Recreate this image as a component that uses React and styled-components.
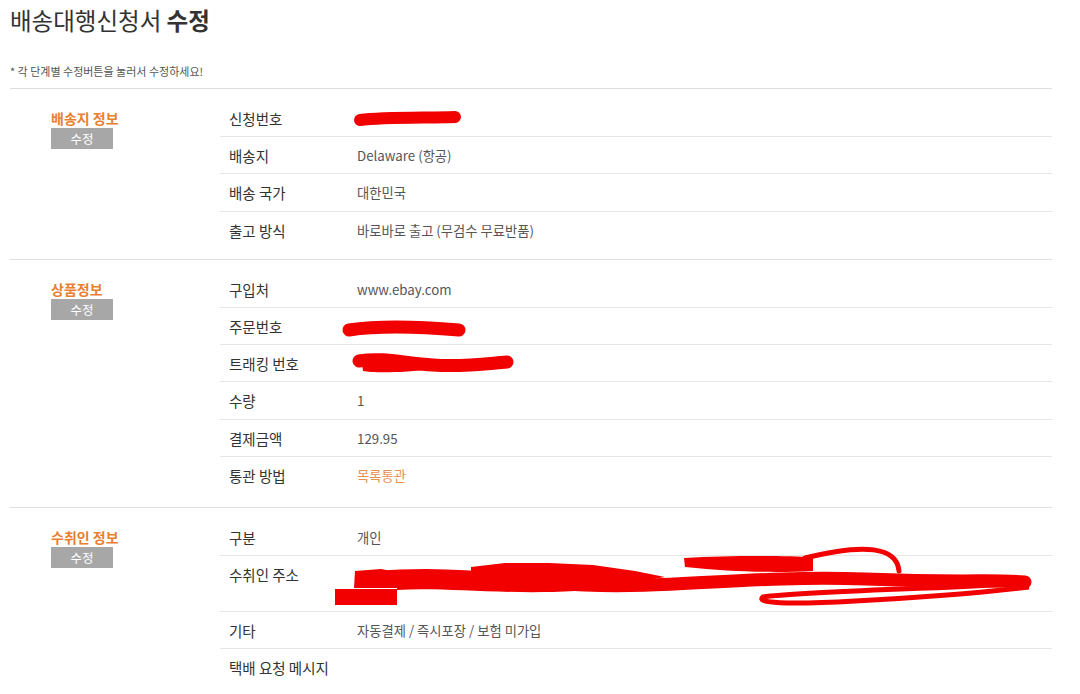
import styled, { createGlobalStyle } from "styled-components";

const GlobalStyle = createGlobalStyle`
  body {
    margin: 0;
    background: #fff;
    font-family: "Noto Sans CJK KR", "Noto Sans", sans-serif;
    color: #333;
  }
`;

const Page = styled.div`
  padding: 4px 28px 0 10px;
`;

const Title = styled.h1`
  margin: 0;
  font-size: 23.5px;
  line-height: 32px;
  font-weight: 400;
  color: #333;
  b {
    font-weight: 700;
  }
`;

const Note = styled.p`
  margin: 28px 0 0;
  font-size: 11px;
  line-height: 14px;
  color: #555;
`;

const Sections = styled.div`
  margin-top: 10px;
  border-top: 1px solid #dedede;
`;

const Section = styled.section`
  display: grid;
  grid-template-columns: 210px 1fr;
  padding: ${(p) => p.$pt || 11}px 0 ${(p) => p.$pb || 10}px;
  border-bottom: 1px solid #dedede;
`;

const Side = styled.div`
  padding: 9px 0 0 41px;
  display: flex;
  flex-direction: column;
  align-items: flex-start;
`;

const Heading = styled.div`
  font-size: 14px;
  line-height: 18px;
  font-weight: 700;
  color: #e8802f;
`;

const EditButton = styled.button`
  margin-top: 1px;
  width: 62px;
  height: 21px;
  border: 0;
  padding: 0;
  background: #a7a7a7;
  color: #fff;
  font-family: inherit;
  font-size: 12.5px;
  line-height: 21px;
`;

const Rows = styled.div`
  display: flex;
  flex-direction: column;
`;

const Row = styled.div`
  display: grid;
  grid-template-columns: 137px 1fr;
  align-items: start;
  min-height: ${(p) => p.$h || 37.2}px;
  box-sizing: border-box;
  padding-top: 9px;
  border-bottom: ${(p) => (p.$last ? "none" : "1px solid #e6e6e6")};
`;

const Label = styled.div`
  padding-left: 9px;
  font-size: 14.5px;
  line-height: 20px;
  color: #333;
`;

const Value = styled.div`
  position: relative;
  font-size: 13.3px;
  line-height: 20px;
  color: ${(p) => (p.$accent ? "#e8904f" : "#555")};
`;

const Scribble = styled.svg`
  position: absolute;
  left: ${(p) => p.$x}px;
  top: ${(p) => p.$y}px;
  overflow: visible;
`;

const red = "#f20000";

function Redact1() {
  return (
    <Scribble $x={-2} $y={3} width="106" height="16">
      <path d="M5 8 C 30 5, 70 6, 100 5" stroke={red} strokeWidth="12" strokeLinecap="round" fill="none" />
    </Scribble>
  );
}

function Redact2() {
  return (
    <Scribble $x={-14} $y={2} width="122" height="20">
      <path d="M6 11 C 40 6, 80 8, 116 11" stroke={red} strokeWidth="13" strokeLinecap="round" fill="none" />
      <path d="M20 4 L 90 6 L 90 10 L 20 10 Z" fill={red} />
    </Scribble>
  );
}

function Redact3() {
  return (
    <Scribble $x={-4} $y={-3} width="160" height="26">
      <path d="M6 10 C 30 6, 50 12, 80 14 S 130 13, 154 11" stroke={red} strokeWidth="13" strokeLinecap="round" fill="none" />
      <path d="M8 4 C 30 2, 60 6, 80 10 L 80 18 C 50 22, 20 22, 10 20 Z" fill={red} />
    </Scribble>
  );
}

function RedactAddress() {
  return (
    <Scribble $x={-22} $y={-20} width="700" height="62">
      <path d="M20 26 L 46 24 L 62 27 L 62 43 L 19 43 Z" fill={red} />
      <rect x="0" y="44" width="62" height="16" fill={red} />
      <path d="M40 33 C 110 26, 170 36, 250 40 S 420 30, 530 34 S 650 34, 690 37" stroke={red} strokeWidth="13" strokeLinecap="round" fill="none" />
      <path d="M62 27 C 120 24, 170 30, 220 36 L 240 46 C 170 50, 110 42, 62 45 Z" fill={red} />
      <path d="M136 22 L 170 18 L 214 18 L 258 20 L 300 26 L 330 32 L 260 44 L 136 40 Z" fill={red} />
      <path d="M349 13 C 400 10, 450 11, 478 12 L 478 26 C 440 28, 400 27, 350 22 Z" fill={red} />
      <path d="M470 13 C 530 -2, 562 2, 564 26" stroke={red} strokeWidth="5" strokeLinecap="round" fill="none" />
      <path d="M694 38 C 600 44, 470 46, 428 52 C 420 58, 450 60, 520 56 C 600 52, 660 46, 694 42" stroke={red} strokeWidth="5" fill="none" />
      <path d="M560 30 L 694 32 L 694 42 L 560 40 Z" fill={red} />
    </Scribble>
  );
}

const sections = [
  {
    title: "배송지 정보",
    pt: 11,
    pb: 10,
    rows: [
      { label: "신청번호", value: <Redact1 /> },
      { label: "배송지", value: "Delaware (항공)" },
      { label: "배송 국가", value: "대한민국" },
      { label: "출고 방식", value: "바로바로 출고 (무검수 무료반품)" },
    ],
  },
  {
    title: "상품정보",
    pt: 11,
    pb: 13,
    rows: [
      { label: "구입처", value: "www.ebay.com" },
      { label: "주문번호", value: <Redact2 /> },
      { label: "트래킹 번호", value: <Redact3 /> },
      { label: "수량", value: "1" },
      { label: "결제금액", value: "129.95" },
      { label: "통관 방법", value: "목록통관", accent: true },
    ],
  },
  {
    title: "수취인 정보",
    pt: 11,
    pb: 10,
    rows: [
      { label: "구분", value: "개인" },
      { label: "수취인 주소", value: <RedactAddress />, h: 56 },
      { label: "기타", value: "자동결제 / 즉시포장 / 보험 미가입" },
      { label: "택배 요청 메시지", value: "" },
    ],
  },
];

export default function App() {
  return (
    <Page>
      <GlobalStyle />
      <Title>
        배송대행신청서 <b>수정</b>
      </Title>
      <Note>* 각 단계별 수정버튼을 눌러서 수정하세요!</Note>
      <Sections>
        {sections.map((s) => (
          <Section key={s.title} $pt={s.pt} $pb={s.pb}>
            <Side>
              <Heading>{s.title}</Heading>
              <EditButton>수정</EditButton>
            </Side>
            <Rows>
              {s.rows.map((r, i) => (
                <Row key={r.label} $h={r.h} $last={i === s.rows.length - 1}>
                  <Label>{r.label}</Label>
                  <Value $accent={r.accent}>{r.value}</Value>
                </Row>
              ))}
            </Rows>
          </Section>
        ))}
      </Sections>
    </Page>
  );
}
